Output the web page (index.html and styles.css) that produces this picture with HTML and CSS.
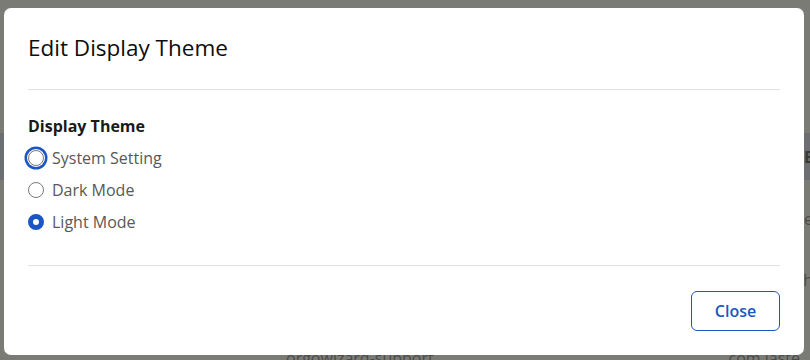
FILE: index.html
```html
<!DOCTYPE html>
<html lang="en">
<head>
<meta charset="utf-8">
<title>Edit Display Theme</title>
<link rel="stylesheet" href="styles.css">
</head>
<body>
<div class="page">
  <div class="page-top"></div>
  <div class="table-head"><span class="col-end">E</span></div>
  <div class="table-row row-a"><span class="col-end">e</span></div>
  <div class="table-row row-b"><span class="col-end">h</span></div>
  <div class="table-row row-c"><span class="col-mid">orgowizard-support</span><span class="col-last">com laste</span></div>
</div>
<div class="overlay">
  <div class="modal" role="dialog" aria-labelledby="modal-title">
    <div class="modal-header">
      <h2 id="modal-title" class="modal-title">Edit Display Theme</h2>
    </div>
    <div class="modal-body">
      <div class="field-label">Display Theme</div>
      <label class="radio-row">
        <span class="radio radio-focus"></span>
        <span class="radio-text">System Setting</span>
      </label>
      <label class="radio-row">
        <span class="radio"></span>
        <span class="radio-text">Dark Mode</span>
      </label>
      <label class="radio-row">
        <span class="radio radio-checked"></span>
        <span class="radio-text">Light Mode</span>
      </label>
    </div>
    <div class="modal-footer">
      <button class="btn-close" type="button">Close</button>
    </div>
  </div>
</div>
</body>
</html>
```

FILE: styles.css
```css
* { box-sizing: border-box; }
html, body { margin: 0; padding: 0; }
body {
  width: 810px;
  height: 360px;
  overflow: hidden;
  background: #7b7b76;
  font-family: "Open Sans", "Noto Sans", sans-serif;
  position: relative;
}

/* dimmed page behind the modal */
.page { width: 810px; height: 360px; overflow: hidden; }
.page-top { height: 133px; }
.table-head {
  height: 47px;
  background: #6d6e72;
  display: flex;
  justify-content: flex-end;
  align-items: center;
}
.table-row {
  display: flex;
  justify-content: flex-end;
  align-items: center;
  color: #4b4b48;
  font-size: 16px;
}
.row-a { height: 77px; }
.row-b { height: 46px; }
.row-c { height: 57px; justify-content: flex-start; align-items: flex-end; }
.col-end {
  color: #4b4b48;
  font-size: 16px;
  margin-right: -3px;
}
.table-head .col-end { color: #3a3a35; font-weight: 700; }
.col-mid { margin-left: 286px; line-height: 16px; margin-bottom: -6px; }
.col-last { margin-left: auto; margin-right: 10px; line-height: 16px; margin-bottom: -6px; }

/* overlay + modal */
.overlay {
  position: absolute;
  inset: 0;
  padding: 8px 6px 5px 4px;
}
.modal {
  width: 800px;
  height: 347px;
  background: #ffffff;
  border-radius: 7px;
  padding: 0 24px;
  display: flex;
  flex-direction: column;
}
.modal-header {
  padding: 24px 0 25px;
  border-bottom: 1px solid #dfe1e8;
}
.modal-title {
  margin: 0;
  font-size: 22.5px;
  line-height: 32px;
  font-weight: 500;
  color: #0d0d0d;
}
.modal-body {
  padding: 25px 0 27px;
  border-bottom: 1px solid #dfe1e8;
}
.field-label {
  font-size: 16px;
  line-height: 22px;
  font-weight: 700;
  color: #1a1a1a;
  margin-bottom: 5px;
}
.radio-row {
  display: flex;
  align-items: center;
  gap: 8px;
  height: 32px;
}
.radio {
  width: 16px;
  height: 16px;
  border-radius: 50%;
  border: 1px solid #7a7a7a;
  background: #ffffff;
  flex: none;
}
.radio-focus {
  box-shadow: 0 0 0 1px #ffffff, 0 0 0 3.5px #1a56c4;
}
.radio-checked {
  border: 5px solid #1a56c4;
}
.radio-text {
  font-size: 16px;
  line-height: 22px;
  color: #585858;
}
.modal-footer {
  padding: 25px 0 0;
  display: flex;
  justify-content: flex-end;
}
.btn-close {
  width: 89px;
  height: 40px;
  border: 1px solid #1a56c4;
  border-radius: 6px;
  background: #ffffff;
  color: #1a56c4;
  font-family: "Open Sans", "Noto Sans", sans-serif;
  font-size: 16px;
  font-weight: 600;
  padding: 0;
}
```
